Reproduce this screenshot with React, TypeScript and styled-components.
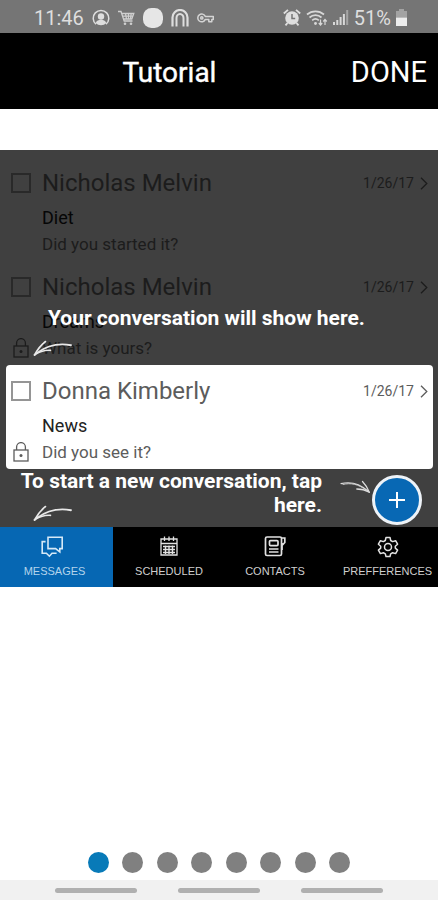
import React from 'react';
import styled, { createGlobalStyle } from 'styled-components';

const GlobalStyle = createGlobalStyle`
  * { box-sizing: border-box; }
  body { margin: 0; background: #fff; font-family: Roboto, "Liberation Sans", sans-serif; }
  button { font: inherit; border: 0; margin: 0; padding: 0; background: none; color: inherit; cursor: pointer; }
`;

const Page = styled.div`
  display: flex;
  flex-direction: column;
  min-height: 100vh;
  background: #fff;
`;

const StatusBar = styled.div`
  display: flex;
  justify-content: space-between;
  align-items: center;
  height: 33px;
  padding: 2px 31px 0 34px;
  background: #757575;
  color: #dedede;
  font-size: 20px;
  line-height: 32px;
`;

const StatusGroup = styled.div<{ $gap: number }>`
  display: flex;
  align-items: center;
  gap: ${(p) => p.$gap}px;
  svg { display: block; }
`;

const Header = styled.header`
  display: flex;
  align-items: center;
  height: 76px;
  padding-top: 2px;
  background: #000;
  color: #fff;
`;

const Title = styled.h1`
  flex: 1;
  margin: 0;
  text-align: center;
  font-size: 28px;
  font-weight: 400;
  -webkit-text-stroke: 0.4px #fff;
`;

const DoneButton = styled.button`
  padding: 0 11px 0 12px;
  font-size: 29px;
`;

const Preview = styled.main`
  margin-top: 41px;
  background: #404040;
`;

const Conversations = styled.ul`
  list-style: none;
  margin: 0;
  padding: 7px 5px 0 6px;
`;

const Conversation = styled.li<{ $lit?: boolean }>`
  position: relative;
  display: grid;
  grid-template-columns: 20px 1fr auto;
  grid-template-rows: 52px 18px 34px;
  column-gap: 11px;
  align-items: center;
  height: 104px;
  padding: 0 5px;
  border-radius: 4px;
  background: ${(p) => (p.$lit ? '#fff' : 'transparent')};
  color: ${(p) => (p.$lit ? '#5c5c5c' : '#1c1c1c')};
  --strong: ${(p) => (p.$lit ? '#222' : '#060606')};
  --box: ${(p) => (p.$lit ? '#959595' : '#292929')};
`;

const Tick = styled.input`
  appearance: none;
  width: 20px;
  height: 20px;
  margin: 0;
  border: 2px solid var(--box);
`;

const Name = styled.label`
  font-size: 24px;
  line-height: 30px;
`;

const DateLink = styled.a`
  display: flex;
  align-items: center;
  gap: 6px;
  color: inherit;
  font-size: 14px;
  text-decoration: none;
`;

const Subject = styled.div`
  grid-column: 2 / 4;
  color: var(--strong);
  font-size: 18px;
  line-height: 18px;
`;

const Message = styled.div`
  grid-column: 2 / 4;
  font-size: 17px;
  line-height: 20px;
`;

const LockSlot = styled.div`
  height: 20px;
  display: flex;
  justify-content: center;
`;

const hintText = `
  margin: 0;
  color: #fff;
  font-size: 21px;
  font-weight: 700;
  line-height: 24px;
`;

const OverHint = styled.p`
  ${hintText}
  position: absolute;
  left: 42px;
  top: 45px;
  white-space: nowrap;
`;

const OverArrow = styled.div`
  position: absolute;
  left: 27px;
  top: 79px;
`;

const StartRow = styled.div`
  display: flex;
  align-items: flex-start;
  height: 58px;
  padding-right: 16px;
`;

const HintColumn = styled.div`
  position: relative;
  flex: 1;
`;

const StartHint = styled.p`
  ${hintText}
  padding-left: 16px;
  text-align: right;
`;

const StartArrow = styled.div`
  position: absolute;
  left: 33px;
  top: 36px;
`;

const PointerArrow = styled.div`
  padding: 10px 0 0 18px;
`;

const AddButton = styled.button`
  display: grid;
  place-items: center;
  width: 50px;
  height: 50px;
  margin: 6px 0 0 1px;
  border: 3px solid #eef3f8;
  border-radius: 50%;
  background: #0868b4;
  color: #fff;
`;

const Tabs = styled.nav`
  display: grid;
  grid-template-columns: 113fr 112fr 100fr 113fr;
  height: 60px;
`;

const Tab = styled.button<{ $active?: boolean; $space?: string }>`
  display: flex;
  flex-direction: column;
  align-items: center;
  gap: 5px;
  padding: ${(p) => p.$space ?? '9px 0 0'};
  background: ${(p) => (p.$active ? '#0667b3' : '#000')};
  color: ${(p) => (p.$active ? '#b4d4ec' : '#cfcfcf')};
  font-family: "Liberation Sans", Arial, sans-serif;
  font-size: 11px;
  line-height: 16px;
`;

const Pager = styled.div`
  display: flex;
  justify-content: space-between;
  width: 60%;
  margin: auto auto 7px;
`;

const Dot = styled.button<{ $active?: boolean }>`
  width: 21px;
  height: 21px;
  border-radius: 50%;
  background: ${(p) => (p.$active ? '#087ab8' : '#808080')};
`;

const SystemBar = styled.div`
  display: flex;
  justify-content: center;
  align-items: center;
  gap: 41px;
  height: 20px;
  background: #f1f1f1;
`;

const Pill = styled.span`
  width: 82px;
  height: 5px;
  border-radius: 3px;
  background: #b0b0b0;
`;

const PersonIcon = () => (
  <svg width="18" height="18" viewBox="0 0 18 18" fill="none" stroke="#dedede">
    <path d="M4 15.200A7.800 7.800 0 1 1 14 15.200" strokeWidth="1.500" />
    <circle cx="9" cy="7.500" r="3.200" fill="#dedede" stroke="none" />
    <path d="M3.600 14c1-2.400 3-3.200 5.400-3.200s4.400.8 5.400 3.200A7.500 7.500 0 0 1 3.600 14z" fill="#dedede" stroke="none" />
  </svg>
);

const CartIcon = () => (
  <svg width="17" height="16" viewBox="0 0 17 16" fill="none" stroke="#cfcfcf" strokeWidth="1.300">
    <path d="M0 1.500h3l3.200 9.500h8.300M3.600 3.500h12.200l-2 5.500H5.500M5 6.200h10M7.500 3.500l1 5.500M10.500 3.500v5.500M13.200 3.500l-.7 5.500" />
    <circle cx="7" cy="13.700" r="1.300" fill="#cfcfcf" stroke="none" />
    <circle cx="13" cy="13.700" r="1.300" fill="#cfcfcf" stroke="none" />
  </svg>
);

const BlobIcon = () => (
  <svg width="20" height="20" viewBox="0 0 20 20">
    <rect width="20" height="20" rx="8.500" fill="#e6e6e6" />
  </svg>
);

const ArchIcon = () => (
  <svg width="18" height="18" viewBox="0 0 18 18" fill="none" stroke="#dedede">
    <path d="M1.500 17.500V8.500a7.500 7.500 0 0 1 15 0v9" strokeWidth="2.200" />
    <path d="M5.500 17.500V9a3.500 4 0 0 1 7 0v8.500" strokeWidth="2" />
  </svg>
);

const KeyIcon = () => (
  <svg width="17" height="10" viewBox="0 0 17 10" fill="none" stroke="#d4d4d4" strokeWidth="1.500">
    <path d="M8.300 3.400h8v3h-1.500v2.300h-3V6.400H8.300A3.900 3.900 0 1 1 8.300 3.400z" strokeLinejoin="round" />
    <circle cx="4.800" cy="4.900" r="1.100" />
  </svg>
);

const AlarmIcon = () => (
  <svg width="18" height="17" viewBox="0 0 18 17" fill="none">
    <circle cx="9" cy="9" r="6.800" fill="#dedede" />
    <path d="M.8 4.500L5 .9M17.200 4.500L13 .9M4.500 14l-2 2.300M13.500 14l2 2.300" stroke="#dedede" strokeWidth="1.900" />
    <path d="M9 5v4.400h3.200" stroke="#757575" strokeWidth="1.500" />
  </svg>
);

const WifiIcon = () => (
  <svg width="22" height="18" viewBox="0 0 22 18" fill="none" stroke="#d8d8d8" strokeWidth="1.700">
    <path d="M1 5.500a13 13 0 0 1 17 0M3.500 8.500a9 9 0 0 1 12 0M6.200 11.400a5 5 0 0 1 6.600 0" />
    <circle cx="9.500" cy="14.500" r="1.400" fill="#d8d8d8" stroke="none" />
    <path d="M14.500 10.500v5M12.800 14l1.700 2 1.700-2M19 16v-5M17.300 12.500l1.700-2 1.700 2" strokeWidth="1.200" />
  </svg>
);

const SignalIcon = () => (
  <svg width="16" height="17" viewBox="0 0 16 17">
    <path d="M0 13h2v3H0zM3.300 11h2v5h-2zM6.600 8h2v8h-2zM9.900 5h2v11h-2z" fill="#d8d8d8" />
    <path d="M13.200 1h2v15h-2z" fill="#a5a5a5" />
  </svg>
);

const BatteryIcon = () => (
  <svg width="11" height="17" viewBox="0 0 11 17">
    <path d="M3 0h5v2h3v6.500H0V2h3z" fill="#a3a3a3" />
    <path d="M0 8.500h11V17H0z" fill="#ededed" />
  </svg>
);

const LockIcon = () => (
  <svg width="16" height="20" viewBox="0 0 16 20" fill="none" stroke="currentColor" strokeWidth="1.300">
    <rect x="1" y="8" width="14" height="11" />
    <path d="M3.600 8V5a4.400 4.400 0 0 1 8.800 0v3" />
    <circle cx="8" cy="13.400" r="1.500" fill="currentColor" stroke="none" />
  </svg>
);

const Chevron = () => (
  <svg width="8" height="13" viewBox="0 0 8 13" fill="none" stroke="currentColor" strokeWidth="1.300">
    <path d="M1 .7l5.800 5.800L1 12.300" />
  </svg>
);

const SketchArrow = () => (
  <svg width="40" height="17" viewBox="0 0 40 17" fill="none" stroke="#e8e8e8" strokeLinecap="round">
    <path d="M38 5.200C27 3.200 15 4.800 4 13" strokeWidth="1.900" />
    <path d="M12.500 1.500C8 5 4.500 9.500 1.500 15" strokeWidth="1.600" />
    <path d="M1.500 15c5-3.600 10-5 16-4.700" strokeWidth="1.700" />
  </svg>
);

const PointArrow = () => (
  <svg width="31" height="14" viewBox="0 0 31 14" fill="none" stroke="#dcdcdc" strokeLinecap="round">
    <path d="M1 3.600C10 1.400 19 3 28 11" strokeWidth="1.100" />
    <path d="M3 4.400c8-1.800 15-.4 23 5.600" strokeWidth=".9" />
    <path d="M22.500 1.500c3 3 5 6.500 6.800 10.800" strokeWidth="1.300" />
    <path d="M29.300 12.300c-4-2.300-8-3.300-12.500-3.300" strokeWidth="1.300" />
  </svg>
);

const PlusIcon = () => (
  <svg width="16" height="16" viewBox="0 0 16 16" stroke="currentColor" strokeWidth="2">
    <path d="M8 0v16M0 8h16" />
  </svg>
);

const ChatIcon = () => (
  <svg width="28" height="22" viewBox="0 0 28 22" fill="none" stroke="#d6e9f7" strokeWidth="1.600">
    <path d="M7 1.200h14.200v11.400h-2.400v3.200l-4.200-3.200H7z" />
    <path d="M4.600 5.600H1.200v11.600h4.200l3 3 2.600-3h4.600" />
  </svg>
);

const CalendarIcon = () => (
  <svg width="18" height="22" viewBox="0 0 18 22" fill="none" stroke="#e2e2e2" strokeWidth="1.300">
    <path d="M1 3h16v16H1zM1 7.500h16M4.500 .5v4.500M9 .5v4.500M13.500 .5v4.500" />
    <path d="M3 10.500h12M3 13.500h12M3 16.500h12M5.500 9.500v8.500M9 9.500v8.500M12.500 9.500v8.500" strokeWidth="1.400" />
  </svg>
);

const BookIcon = () => (
  <svg width="22" height="22" viewBox="0 0 22 22" fill="none" stroke="#e2e2e2" strokeWidth="1.700">
    <rect x="1.500" y="1" width="16" height="18.500" rx="1.500" />
    <rect x="5.500" y="4.600" width="8.500" height="5" rx="1" />
    <path d="M5 13h9.500M5 16h9.500M18 2h2.800v4.500L18.500 9M18 14V7" />
  </svg>
);

const GearIcon = () => (
  <svg width="22" height="22" viewBox="0 0 22 22" fill="none" stroke="#e2e2e2" strokeWidth="1.500" strokeLinejoin="round">
    <path d="M9 1.500h4l.7 3 1.900 1.100 3-.9 2 3.500-2.300 2v1.900l2.300 2-2 3.500-3-.9-1.900 1.100-.7 2.700H9l-.7-2.700-1.900-1.100-3 .9-2-3.500 2.300-2v-1.900l-2.300-2 2-3.500 3 .9 1.900-1.100z" />
    <circle cx="11" cy="11" r="3.500" />
  </svg>
);

type RowData = { id: string; name: string; subject: string; message: string; locked?: boolean; lit?: boolean; hint?: string };

const rows: RowData[] = [
  { id: 'c1', name: 'Nicholas Melvin', subject: 'Diet', message: 'Did you started it?' },
  { id: 'c2', name: 'Nicholas Melvin', subject: 'Dreams', message: 'What is yours?', locked: true, hint: 'Your conversation will show here.' },
  { id: 'c3', name: 'Donna Kimberly', subject: 'News', message: 'Did you see it?', locked: true, lit: true },
];

export default function App() {
  return (
    <Page>
      <GlobalStyle />
      <StatusBar>
        <StatusGroup $gap={8}>
          <span>11:46</span>
          <PersonIcon />
          <CartIcon />
          <BlobIcon />
          <ArchIcon />
          <KeyIcon />
        </StatusGroup>
        <StatusGroup $gap={5}>
          <AlarmIcon />
          <WifiIcon />
          <SignalIcon />
          <span>51%</span>
          <BatteryIcon />
        </StatusGroup>
      </StatusBar>
      <Header>
        <Title>Tutorial</Title>
        <DoneButton type="button">DONE</DoneButton>
      </Header>
      <Preview>
        <Conversations>
          {rows.map((row) => (
            <Conversation key={row.id} $lit={row.lit}>
              <Tick type="checkbox" id={row.id} />
              <Name htmlFor={row.id}>{row.name}</Name>
              <DateLink href={`#${row.id}`}>
                1/26/17
                <Chevron />
              </DateLink>
              <Subject>{row.subject}</Subject>
              {row.locked ? <LockSlot><LockIcon /></LockSlot> : null}
              <Message>{row.message}</Message>
              {row.hint ? (
                <>
                  <OverHint>{row.hint}</OverHint>
                  <OverArrow><SketchArrow /></OverArrow>
                </>
              ) : null}
            </Conversation>
          ))}
        </Conversations>
        <StartRow>
          <HintColumn>
            <StartHint>To start a new conversation, tap here.</StartHint>
            <StartArrow><SketchArrow /></StartArrow>
          </HintColumn>
          <PointerArrow><PointArrow /></PointerArrow>
          <AddButton type="button" aria-label="New conversation"><PlusIcon /></AddButton>
        </StartRow>
        <Tabs>
          <Tab type="button" $active $space="9px 4px 0 0"><ChatIcon />MESSAGES</Tab>
          <Tab type="button"><CalendarIcon />SCHEDULED</Tab>
          <Tab type="button"><BookIcon />CONTACTS</Tab>
          <Tab type="button" $space="9px 0 0 12px"><GearIcon />PREFFERENCES</Tab>
        </Tabs>
      </Preview>
      <Pager>
        {[1, 2, 3, 4, 5, 6, 7, 8].map((n) => (
          <Dot key={n} type="button" $active={n === 1} aria-label={`Page ${n}`} />
        ))}
      </Pager>
      <SystemBar>
        <Pill />
        <Pill />
        <Pill />
      </SystemBar>
    </Page>
  );
}
